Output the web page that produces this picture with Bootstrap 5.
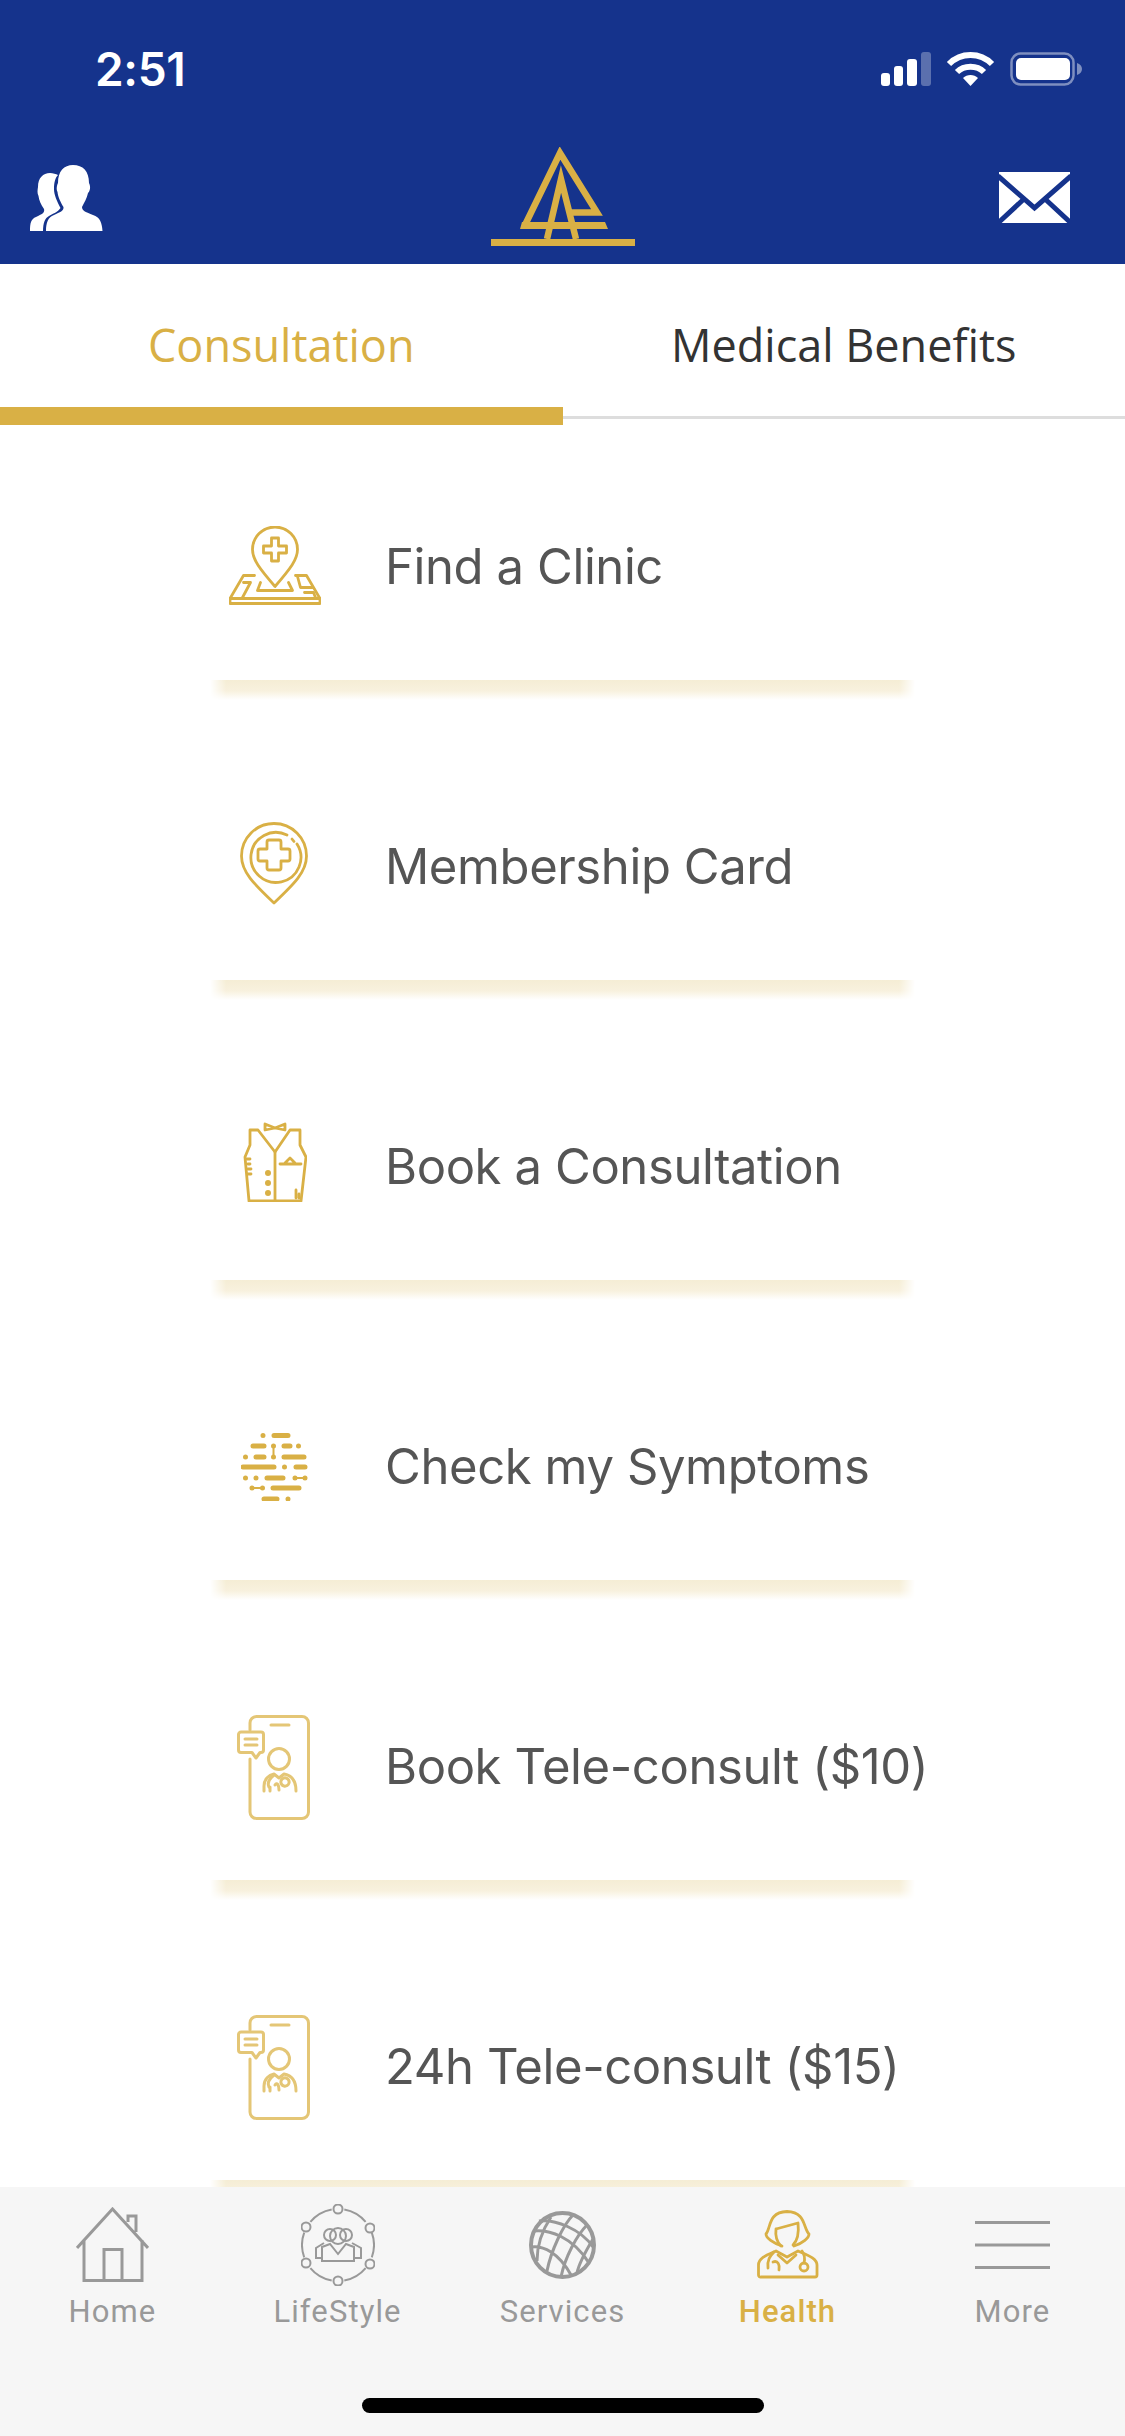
<!doctype html>
<html lang="en">
<head>
<meta charset="utf-8">
<title>Health</title>
<link rel="stylesheet" href="https://cdn.jsdelivr.net/npm/bootstrap@5.3.0/dist/css/bootstrap.min.css">
<style>
html,body{margin:0;height:2436px;width:1125px;overflow:hidden;background:#fff}
.screen{height:2436px;width:1125px}
.app-head{background:#15338c;height:264px;flex:none}
.status-row{height:147px;padding:52px 43px 0 95px}
.clock{font:600 46px/34px Inter,"Liberation Sans",sans-serif;color:#fff;letter-spacing:-.3px}
.status-icons{gap:15px}
.brand-row{display:grid;grid-template-columns:1fr auto 1fr}
.people-ic{margin:18px 0 0 30px}
.mail-ic{margin:25px 55px 0 0;justify-self:end}
.tabs-strip{height:161px;flex:none}
.tabs-strip .nav-link{font:400 45px/62px "Open Sans",sans-serif;padding:50px 0 0;height:161px;color:#333;border-radius:0}
.tabs-strip .nav-link.active{color:#d9b045;border-bottom:18px solid #d9b045}
.tabs-strip .nav-link.idle{height:155px;border-bottom:3px solid #ddd}
.item-list{min-height:0;padding-top:29px;overflow:hidden}
.item-line{height:226px;margin-left:215px;width:695px}
.item-icon{width:120px;flex:none}
.nudge-3{margin-top:-3px}
.nudge-5{margin-top:-7px;margin-left:-2px}
.nudge-7{margin-top:-10px}
.nudge-x{margin-left:-3px}
.item-text{margin-left:50px;font:400 49px/60px Inter,"Liberation Sans",sans-serif;color:#555;white-space:nowrap;letter-spacing:-.4px}
.item-rule{height:20px;margin:0 0 54px 210px;width:705px;background:linear-gradient(to bottom,#f5edd5,#f8f1de 55%,#fff);-webkit-mask-image:linear-gradient(to right,transparent,#000 16px,#000 calc(100% - 16px),transparent);mask-image:linear-gradient(to right,transparent,#000 16px,#000 calc(100% - 16px),transparent)}
.gold{stroke:#d9b045;fill:none;stroke-width:2.8;stroke-linecap:round;stroke-linejoin:round}
.gold-soft{stroke:#e4c676;fill:none;stroke-width:3;stroke-linecap:round;stroke-linejoin:round}
.tabbar{height:249px;flex:none;background:#f6f6f6}
.tab-col{width:225px;padding-top:15px}
.tab-art{height:85px}
.tab-name{font:400 31px/36px Roboto,sans-serif;color:#999;letter-spacing:1.1px;margin-top:7px}
.tab-name.on{color:#d9b045;font-weight:500}
.grey{stroke:#999;fill:none;stroke-width:3}
.home-pill{width:402px;height:15px;background:#000;border-radius:8px;margin:0 auto}
.pill-row{padding-top:68px}
</style>
</head>
<body>
<div class="screen d-flex flex-column">
  <header class="app-head">
    <div class="status-row d-flex justify-content-between align-items-start">
      <span class="clock">2:51</span>
      <div class="status-icons d-flex align-items-start">
        <svg width="50" height="34" viewBox="0 0 50 34"><g fill="#fff"><rect x="0" y="21" width="9" height="13" rx="3"/><rect x="13" y="14" width="9" height="20" rx="3"/><rect x="26" y="7" width="10" height="27" rx="3"/><rect x="40" y="0" width="10" height="34" rx="3" opacity=".3"/></g></svg>
        <svg width="49" height="34" viewBox="0 0 49 34"><g fill="none" stroke="#fff" stroke-width="6"><path d="M3 12C15 0 34 0 46 12"/><path d="M11 20C18 13 31 13 38 20"/></g><path d="M17 26C21 22 28 22 32 26L24.500 34Z" fill="#fff"/></svg>
        <svg width="72" height="34" viewBox="0 0 72 34"><rect x="1.500" y="1.500" width="62" height="31" rx="9" fill="none" stroke="#fff" stroke-width="2.500" opacity=".45"/><rect x="6" y="6" width="54" height="22" rx="5" fill="#fff"/><path d="M67 11C70 12 72 14 72 17S70 22 67 23Z" fill="#fff" opacity=".45"/></svg>
      </div>
    </div>
    <div class="brand-row">
      <svg class="people-ic" width="73" height="66" viewBox="0 0 73 66" fill="#fff"><path d="M0 66C0 58 1 54 6 52C12 49 15 48 14 44C11 40 9 35 8.500 31C7 28 7.500 25 8 22C8 13 13 8 20 8C23 8 26 9 28 10C25 13 24 18 24 24C24 30 27 36 30.500 43C28 47 24 48 19 51C15 53 13 58 13 66Z"/><path d="M16 66C16 58 18 52 24 50C30 47 34 46 33.500 42C31 38 28 32 27.500 27C26 24 27 20 28 18C28 6 34 0 43 0C53 0 59 6 59 18C61 22 60 26 58 28C57 33 54 38 52 42C52 46 56 47 63 50C70 52 72 58 72.500 66Z"/></svg>
      <svg width="144" height="99" viewBox="0 0 144 99"><g fill="none" stroke="#d9b045" stroke-width="6.500" stroke-miterlimit="8"><path d="M34 78L69 6L106 65.500H78"/><path d="M56 92L70 32L85 92"/></g><path d="M31 75H114L117 82H29Z" fill="#d9b045"/><rect y="92" width="144" height="7" fill="#d9b045"/></svg>
      <svg class="mail-ic" width="71" height="51" viewBox="0 0 71 51"><rect width="71" height="51" fill="#fff"/><path d="M-1 4L35.500 36L72 4M-1 51L26 26M72 51L45 26" fill="none" stroke="#15338c" stroke-width="5"/></svg>
    </div>
  </header>

  <ul class="nav nav-justified tabs-strip">
    <li class="nav-item"><a class="nav-link active" href="#">Consultation</a></li>
    <li class="nav-item"><a class="nav-link idle" href="#">Medical Benefits</a></li>
  </ul>

  <main class="item-list flex-grow-1">
    <div class="item-line d-flex align-items-center">
      <div class="item-icon d-flex justify-content-center">
        <svg class="gold nudge-3" width="92" height="79" viewBox="-0.500 -0.500 92 79"><path d="M45.500 60C30 42 23 33 23 23A22.500 22.500 0 0 1 68 23C68 33 61 42 45.500 60Z"/><path d="M42 11.500h7v8h8v7h-8v8h-7v-8h-8v-7h8z"/><path d="M25 49H14L0.500 72V77H90.500V72L77 49H66"/><path d="M0.500 72H90.500"/><path d="M14 56H21L13 71M31 56L28 64H63L59 56M68 50L71 61H83M75 66H84L86 71"/></svg>
      </div>
      <span class="item-text">Find a Clinic</span>
    </div>
    <div class="item-rule"></div>

    <div class="item-line d-flex align-items-center">
      <div class="item-icon d-flex justify-content-center">
        <svg class="gold nudge-5" width="68" height="83" viewBox="0 0 68 83"><path d="M34 81C14 62 1.500 50 1.500 34A32.500 32.500 0 0 1 66.500 34C66.500 50 54 62 34 81Z"/><path d="M47 13A25 25 0 1 0 57 22"/><path d="M52 17L54 19.500"/><path d="M29 18h10a2 2 0 0 1 2 2v7h7a2 2 0 0 1 2 2v8a2 2 0 0 1-2 2h-7v7a2 2 0 0 1-2 2H29a2 2 0 0 1-2-2v-7h-7a2 2 0 0 1-2-2v-8a2 2 0 0 1 2-2h7v-7a2 2 0 0 1 2-2z"/></svg>
      </div>
      <span class="item-text">Membership Card</span>
    </div>
    <div class="item-rule"></div>

    <div class="item-line d-flex align-items-center">
      <div class="item-icon d-flex justify-content-center">
        <svg class="gold nudge-7" width="64" height="80" viewBox="0 0 64 80"><path d="M22 2L32 6L42 2V8L32 6L22 8Z"/><path d="M7 8V23L2 35L6 79H58L63 35L57 23V8H47L32 30L15 8Z"/><path d="M32 30V79"/><path d="M37 42H58M42 41L47 36L52 41"/><path d="M4 37H7M5 42H7M5 47H8M5 52H8M53 76V68M56 76V72"/><g fill="#d9b045" stroke="none"><circle cx="25" cy="51" r="3"/><circle cx="25" cy="61" r="3"/><circle cx="25" cy="71" r="3"/></g></svg>
      </div>
      <span class="item-text">Book a Consultation</span>
    </div>
    <div class="item-rule"></div>

    <div class="item-line d-flex align-items-center">
      <div class="item-icon d-flex justify-content-center">
        <svg width="68" height="68" viewBox="0 0 68 68" fill="none" stroke="#d9b045" stroke-width="5" stroke-linecap="round"><path d="M22 2.500h0M33 2.500H47M12 13H23M32.500 13h0M43 13H49M57.500 13h0M4.500 24h0M15 24H23M32.500 24h0M43 24H63M2 34H33M43.500 34h0M55 34H64M4.500 45h0M15 45h0M26 45H42M54 45h0M64 45h0M11 55h0M21.500 55h0M32 55H58M23 66H36M47 66h0"/><path d="M32.500 13V24M54 45H64M11 55H21.500" stroke-width="2"/></svg>
      </div>
      <span class="item-text">Check my Symptoms</span>
    </div>
    <div class="item-rule"></div>

    <div class="item-line d-flex align-items-center">
      <div class="item-icon d-flex justify-content-center">
        <svg class="gold-soft nudge-x" width="73" height="105" viewBox="0 0 73 105"><path d="M13 15V8A6.500 6.500 0 0 1 19.500 1.500H65A6.500 6.500 0 0 1 71.500 8V97A6.500 6.500 0 0 1 65 103.500H19.500A6.500 6.500 0 0 1 13 97V44"/><path d="M34 10H52"/><path d="M4 17H24A2.500 2.500 0 0 1 26.500 19.500V35A2.500 2.500 0 0 1 24 37.500H23L19 43L15 37.500H4A2.500 2.500 0 0 1 1.500 35V19.500A2.500 2.500 0 0 1 4 17Z"/><path d="M8 24H20M8 30H20"/><circle cx="42" cy="44" r="10.500"/><path d="M27 76V71C27 64 32 60 37 59L42 63L47 59C53 60 59 64 59 76"/><path d="M33 76V72M37 60C32 64 30 68 32 72M44 66A4 4 0 1 0 52 68A4 4 0 1 0 44 66ZM38 70C40 67 42 70 42 75"/></svg>
      </div>
      <span class="item-text">Book Tele-consult ($10)</span>
    </div>
    <div class="item-rule"></div>

    <div class="item-line d-flex align-items-center">
      <div class="item-icon d-flex justify-content-center">
        <svg class="gold-soft nudge-x" width="73" height="105" viewBox="0 0 73 105"><path d="M13 15V8A6.500 6.500 0 0 1 19.500 1.500H65A6.500 6.500 0 0 1 71.500 8V97A6.500 6.500 0 0 1 65 103.500H19.500A6.500 6.500 0 0 1 13 97V44"/><path d="M34 10H52"/><path d="M4 17H24A2.500 2.500 0 0 1 26.500 19.500V35A2.500 2.500 0 0 1 24 37.500H23L19 43L15 37.500H4A2.500 2.500 0 0 1 1.500 35V19.500A2.500 2.500 0 0 1 4 17Z"/><path d="M8 24H20M8 30H20"/><circle cx="42" cy="44" r="10.500"/><path d="M27 76V71C27 64 32 60 37 59L42 63L47 59C53 60 59 64 59 76"/><path d="M33 76V72M37 60C32 64 30 68 32 72M44 66A4 4 0 1 0 52 68A4 4 0 1 0 44 66ZM38 70C40 67 42 70 42 75"/></svg>
      </div>
      <span class="item-text">24h Tele-consult ($15)</span>
    </div>
    <div class="item-rule"></div>
  </main>

  <nav class="tabbar">
    <div class="d-flex">
      <div class="tab-col text-center">
        <div class="tab-art d-flex justify-content-center align-items-center"><svg width="73" height="75" viewBox="0 0 73 75" class="grey"><path d="M1 41L36.500 2L72 41M8 33V73.500H66V33M28 73V42.500H46V73M52 15V9H60V25"/></svg></div>
        <div class="tab-name">Home</div>
      </div>
      <div class="tab-col text-center">
        <div class="tab-art d-flex justify-content-center align-items-center"><svg width="74" height="82" viewBox="0 0 74 82" fill="none" stroke="#999" stroke-width="2"><path d="M43.300 5.500A36 36 0 0 1 64.600 17.900M70.800 28.700A36 36 0 0 1 70.800 53.300M64.600 64.100A36 36 0 0 1 43.300 76.500M30.700 76.500A36 36 0 0 1 9.400 64.100M3.200 53.300A36 36 0 0 1 3.200 28.700M9.400 17.900A36 36 0 0 1 30.700 5.500"/><circle cx="37" cy="5" r="4.500"/><circle cx="69" cy="24" r="4.500"/><circle cx="69" cy="60" r="4.500"/><circle cx="37" cy="77" r="4.500"/><circle cx="5" cy="59" r="4.500"/><circle cx="5" cy="23" r="4.500"/><circle cx="29" cy="31" r="6"/><circle cx="45" cy="31" r="6"/><circle cx="37" cy="32" r="8"/><path d="M21 57V43L29 40L37 50L45 40L53 43V57Z"/><path d="M21 54H15V44L23 39M53 54H60V44L51 39"/></svg></div>
        <div class="tab-name">LifeStyle</div>
      </div>
      <div class="tab-col text-center">
        <div class="tab-art d-flex justify-content-center align-items-center"><svg width="67" height="68" viewBox="0 0 67 68" fill="none" stroke="#999" stroke-width="3"><ellipse cx="33.500" cy="34" rx="31.500" ry="32" stroke-width="4"/><path d="M4 20C20 18 44 26 60 52M10 10C26 8 52 18 64 36M2 36C14 34 30 42 42 64M44 4C34 14 22 40 18 60M58 14C48 24 36 46 32 66M64 28C58 38 50 52 48 62M22 6C14 18 8 34 8 50"/></svg></div>
        <div class="tab-name">Services</div>
      </div>
      <div class="tab-col text-center">
        <div class="tab-art d-flex justify-content-center align-items-center"><svg width="62" height="69" viewBox="0 0 62 69" class="gold"><path d="M25 36C16 33 9 28 9 24C14 18 11 2 30 1.500C49 2 46 18 52 24C52 28 46 33 37 36"/><path d="M19 19L41 13C42 22 41 30 36 35M19 19C18 27 20 32 24 36"/><path d="M1.500 65V55C1.500 48 10 45 19 41L30 47L41 41C50 45 60 48 60 55V65A2 2 0 0 1 58 67H4A2 2 0 0 1 1.500 65Z"/><path d="M21 45L30 53L39 45"/><circle cx="47" cy="57" r="4"/><path d="M45 41C48 45 48 49 47 53M17 42C13 46 10 50 11 58M16 52C21 50 23 55 22 60"/></svg></div>
        <div class="tab-name on">Health</div>
      </div>
      <div class="tab-col text-center">
        <div class="tab-art d-flex justify-content-center align-items-center"><svg width="75" height="48" viewBox="0 0 75 48" stroke="#999" stroke-width="3"><path d="M0 1.500H75M0 24H75M0 46.500H75"/></svg></div>
        <div class="tab-name">More</div>
      </div>
    </div>
    <div class="pill-row"><div class="home-pill"></div></div>
  </nav>
</div>
<script src="https://cdn.jsdelivr.net/npm/bootstrap@5.3.0/dist/js/bootstrap.bundle.min.js"></script>
</body>
</html>
